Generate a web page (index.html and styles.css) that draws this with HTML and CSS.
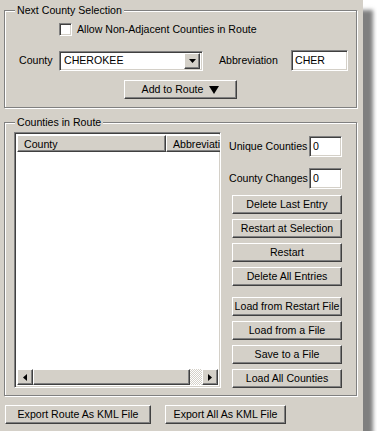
FILE: index.html
```html
<!DOCTYPE html>
<html lang="en">
<head>
    <meta charset="UTF-8">
    <title>Route Builder</title>
    <link rel="stylesheet" href="styles.css">
</head>
<body>
    <div class="window">

        <fieldset class="group group-next">
            <legend>Next County Selection</legend>
            <label class="check-row"><span class="check"></span>Allow Non-Adjacent Counties in Route</label>
            <div class="county-row">
                <span class="county-label">County</span>
                <div class="combo">
                    <span class="combo-text">CHEROKEE</span>
                    <span class="combo-btn">
                        <svg width="7" height="4" viewBox="0 0 7 4"><path d="M0 0h7L3.5 4z" fill="#000"/></svg>
                    </span>
                </div>
                <span class="abbr-label">Abbreviation</span>
                <div class="field abbr-field">CHER</div>
            </div>
            <div class="add-row">
                <button class="btn add-btn">Add to Route
                    <svg width="10" height="8" viewBox="0 0 10 8"><path d="M0 0h10L5 8z" fill="#000"/></svg>
                </button>
            </div>
        </fieldset>

        <fieldset class="group group-route">
            <legend>Counties in Route</legend>
            <div class="route-body">
                <div class="listview">
                    <div class="lv-header">
                        <span class="lv-col col-county">County</span>
                        <span class="lv-col col-abbr">Abbreviation</span>
                    </div>
                    <div class="lv-rows"></div>
                    <div class="hscroll">
                        <span class="sb-btn">
                            <svg width="4" height="7" viewBox="0 0 4 7"><path d="M4 0v7L0 3.5z" fill="#000"/></svg>
                        </span>
                        <span class="sb-thumb"></span>
                        <span class="sb-track"></span>
                        <span class="sb-btn">
                            <svg width="4" height="7" viewBox="0 0 4 7"><path d="M0 0v7l4-3.5z" fill="#000"/></svg>
                        </span>
                    </div>
                </div>

                <div class="side">
                    <div class="stat">
                        <span>Unique Counties</span>
                        <div class="field stat-field">0</div>
                    </div>
                    <div class="stat">
                        <span>County Changes</span>
                        <div class="field stat-field">0</div>
                    </div>
                    <div class="side-btns">
                        <button class="btn side-btn">Delete Last Entry</button>
                        <button class="btn side-btn">Restart at Selection</button>
                        <button class="btn side-btn">Restart</button>
                        <button class="btn side-btn">Delete All Entries</button>
                    </div>
                    <div class="side-btns file-btns">
                        <button class="btn side-btn">Load from Restart File</button>
                        <button class="btn side-btn">Load from a File</button>
                        <button class="btn side-btn">Save to a File</button>
                        <button class="btn side-btn">Load All Counties</button>
                    </div>
                </div>
            </div>
        </fieldset>

        <div class="export-row">
            <button class="btn export-route">Export Route As KML File</button>
            <button class="btn export-all">Export All As KML File</button>
        </div>

    </div>
</body>
</html>
```

FILE: styles.css
```css
body {
    margin: 0;
    background: #fff;
}

.window {
    width: 363px;
    height: 431px;
    box-sizing: border-box;
    padding: 4px 0 0 4px;
    background: #d4d0c8;
    box-shadow: 10px 10px 4px rgba(0, 0, 0, .5);
    font-family: 'Liberation Sans', Arial, sans-serif;
    font-size: 10.6px;
    line-height: 13px;
    color: #000;
    white-space: nowrap;
}

/* etched group boxes */
.group {
    width: 353px;
    box-sizing: border-box;
    margin: 0;
    border: 1px solid #808080;
    box-shadow: inset 1px 1px #fff, 1px 1px #fff;
    min-inline-size: 0;
}

.group legend {
    margin-left: 10px;
    padding: 0 2px;
    background: #d4d0c8;
    line-height: 13px;
}

.group-next {
    padding: 5px 0 8px 0;
}

.group-route {
    margin-top: 8px;
    padding: 3px 0 7px 0;
}

/* sunken / raised bevels */
.field,
.combo,
.listview {
    box-sizing: border-box;
    background: #fff;
    border: 1px solid;
    border-color: #808080 #fff #fff #808080;
    box-shadow: inset 1px 1px #404040, inset -1px -1px #d4d0c8;
}

.btn,
.combo-btn,
.lv-col,
.sb-btn,
.sb-thumb {
    box-sizing: border-box;
    background: #d4d0c8;
    border: 1px solid;
    border-color: #fff #404040 #404040 #fff;
    box-shadow: inset -1px -1px #808080;
}

.btn {
    margin: 0;
    padding: 0;
    height: 19px;
    font: inherit;
    color: #000;
    white-space: nowrap;
}

/* next county selection */
.check-row {
    display: flex;
    align-items: center;
    height: 14px;
    padding-left: 54px;
}

.check {
    width: 13px;
    height: 13px;
    box-sizing: border-box;
    margin-right: 5px;
    background: #fff;
    border: 1px solid;
    border-color: #808080 #fff #fff #808080;
    box-shadow: inset 1px 1px #404040, inset -1px -1px #d4d0c8;
}

.county-row {
    display: flex;
    align-items: center;
    height: 21px;
    margin-top: 14px;
    padding-left: 14px;
}

.county-label {
    width: 40px;
}

.combo {
    display: flex;
    align-items: center;
    width: 144px;
    height: 20px;
    padding: 2px;
}

.combo-text {
    flex: 1;
    padding-left: 2px;
}

.combo-btn {
    display: flex;
    align-items: center;
    justify-content: center;
    width: 16px;
    height: 16px;
}

.abbr-label {
    width: 72px;
    margin-left: 16px;
}

.abbr-field {
    width: 57px;
    height: 21px;
    padding: 3px 0 0 3px;
}

.add-row {
    margin-top: 9px;
    padding-left: 119px;
}

.add-btn {
    display: flex;
    align-items: center;
    justify-content: center;
    gap: 6px;
    width: 113px;
}

/* counties in route */
.route-body {
    display: flex;
    padding-left: 9px;
}

.listview {
    display: flex;
    flex-direction: column;
    width: 207px;
    height: 256px;
    padding: 2px;
    overflow: hidden;
}

.lv-header {
    display: flex;
    height: 17px;
}

.lv-col {
    height: 17px;
    padding: 2px 0 0 6px;
    overflow: hidden;
}

.col-county {
    width: 149px;
    flex: none;
}

.col-abbr {
    flex: none;
    width: 80px;
}

.lv-rows {
    flex: 1;
}

.hscroll {
    display: flex;
    height: 16px;
}

.sb-btn {
    display: flex;
    align-items: center;
    justify-content: center;
    width: 16px;
    flex: none;
}

.sb-thumb {
    width: 157px;
    flex: none;
}

.sb-track {
    flex: 1;
    background: repeating-conic-gradient(#fff 0 25%, #d4d0c8 0 50%) 0 0 / 2px 2px;
}

.side {
    width: 113px;
    margin-left: 8px;
}

.stat {
    display: flex;
    align-items: center;
    justify-content: space-between;
    height: 21px;
    margin-top: 4px;
}

.stat + .stat {
    margin-top: 11px;
}

.stat-field {
    flex: none;
    width: 33px;
    height: 21px;
    padding: 3px 0 0 3px;
}

.side-btns {
    display: flex;
    flex-direction: column;
    gap: 5px;
    margin-top: 6px;
    padding-left: 3px;
}

.file-btns {
    margin-top: 11px;
}

.side-btn {
    width: 110px;
}

/* bottom buttons */
.export-row {
    display: flex;
    gap: 14px;
    margin-top: 9px;
    padding-left: 1px;
}

.export-route {
    width: 146px;
}

.export-all {
    width: 121px;
}
```
